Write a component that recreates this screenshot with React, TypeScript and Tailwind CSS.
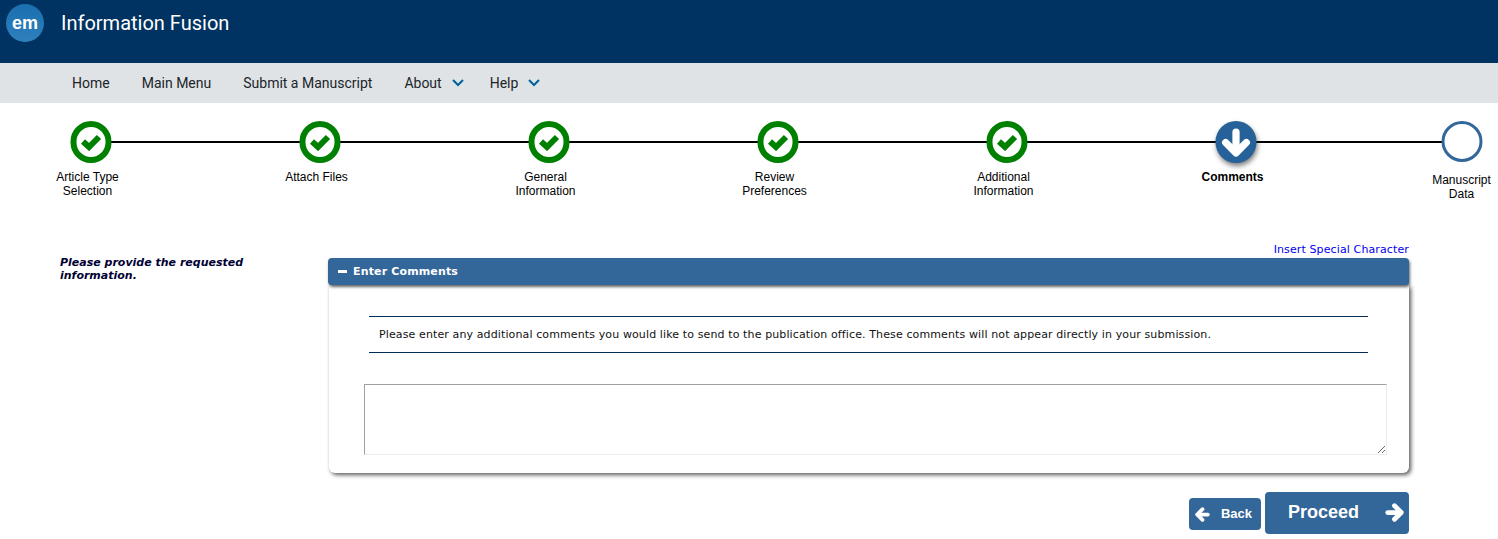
const steps = [
  { label: "Article Type Selection", state: "done" },
  { label: "Attach Files", state: "done" },
  { label: "General Information", state: "done" },
  { label: "Review Preferences", state: "done" },
  { label: "Additional Information", state: "done" },
  { label: "Comments", state: "current" },
  { label: "Manuscript Data", state: "todo" },
];

function IconCheck() {
  return (
    <svg width="21" height="17" viewBox="0 0 21 17" fill="none" stroke="currentColor" strokeWidth="6">
      <path d="M2.5 7.5 8.5 13 18.5 3" />
    </svg>
  );
}

// chunky arrow, points down by default
function IconArrow({ size, className = "" }: { size: number; className?: string }) {
  return (
    <svg width={size} height={size} viewBox="0 0 28 28" fill="none" stroke="currentColor" strokeWidth="7" strokeLinecap="round" strokeLinejoin="round" className={className}>
      <path d="M14 4V23" />
      <path d="M4 14 14 24 24 14" />
    </svg>
  );
}

function IconChevron() {
  return (
    <svg width="12" height="8" viewBox="0 0 12 8" fill="none" stroke="#00629b" strokeWidth="2">
      <path d="M1 1 6 6 11 1" />
    </svg>
  );
}

function StepIcon({ state }: { state: string }) {
  if (state === "done") {
    return (
      <div className="flex h-[42px] w-[41px] items-center justify-center rounded-full border-[6px] border-[#008000] bg-white text-[#008000]">
        <IconCheck />
      </div>
    );
  }
  if (state === "current") {
    return (
      <div className="flex h-[42px] w-[41px] items-center justify-center rounded-full bg-[#266299] text-white shadow-[1px_3px_5px_rgba(0,0,0,0.5)]">
        <IconArrow size={29} />
      </div>
    );
  }
  return <div className="h-[41px] w-[41px] rounded-full border-[3px] border-[#336699] bg-white" />;
}

function Stepper() {
  return (
    <div className="relative h-[125px] pl-[50px]">
      <div className="absolute left-[100px] top-[38px] h-[2px] w-[1345px] bg-black" />
      <div className="relative flex justify-between pt-[18px]">
        {steps.map((s) => (
          <div key={s.label} className="flex w-[74px] translate-x-[0.5px] flex-col items-center">
            <div className={s.state === "todo" ? "" : "translate-x-[3px]"}>
              <StepIcon state={s.state} />
            </div>
            <div
              className={`${s.state === "todo" ? "mt-[11px]" : "mt-[7px]"} ${s.state === "current" ? "font-bold" : ""} text-center font-['Liberation_Sans',sans-serif] text-[12px] leading-[14px] text-black`}
            >
              {s.label}
            </div>
          </div>
        ))}
      </div>
    </div>
  );
}

export default function App() {
  return (
    <div className="h-[539px] overflow-hidden bg-white font-['DejaVu_Sans',sans-serif]">
      <header className="flex h-[63px] items-start gap-[17px] bg-[#003361] pl-[6px] pt-[4px]">
        <div className="flex h-[38px] w-[38px] items-center justify-center rounded-full bg-gradient-to-b from-[#1a6fae] to-[#2f80bd] font-['Liberation_Sans',sans-serif] text-[18px] font-bold text-white">
          em
        </div>
        <div className="pt-[6px] font-['Roboto',sans-serif] text-[20px] leading-[27px] text-white">Information Fusion</div>
      </header>

      <nav className="flex h-[40px] items-center bg-[#dfe3e6] pl-[72px] font-['Roboto',sans-serif] text-[14px] text-[#212529]">
        <a className="mr-[32px]">Home</a>
        <a className="mr-[32px]">Main Menu</a>
        <a className="mr-[32px]">Submit a Manuscript</a>
        <a className="mr-[10px]">About</a>
        <IconChevron />
        <a className="ml-[26px] mr-[10px]">Help</a>
        <IconChevron />
      </nav>

      <Stepper />

      <main className="flex pr-[89px]">
        <div className="w-[328px] shrink-0 pl-[60px] pr-[70px] pt-[28px] text-[11px] font-bold italic leading-[13px] text-[#000033]">
          Please provide the requested information.
        </div>
        <div className="min-w-0 flex-1">
          <div className="h-[30px] pt-[14px] text-right text-[11px] leading-[16px] tracking-[0.12px] text-[#0000ee]">Insert Special Character</div>
          <div className="relative z-10 flex h-[27px] items-center rounded-[4px] bg-[#336699] pl-[10px] text-[11px] font-bold tracking-[0.15px] text-white shadow-[1px_2px_3px_rgba(0,0,0,0.6)]">
            <span className="mr-[6px] h-[2.5px] w-[9px] bg-white" />
            <span className="pt-[1px]">Enter Comments</span>
          </div>
          <section className="ml-[1px] h-[188px] rounded-b-[6px] bg-white pl-[35px] pr-[36px] pt-[31px] shadow-[2px_2px_4px_rgba(0,0,0,0.65)]">
            <div className="mx-[5px] border-y border-[#002b54] py-[10px] pl-[10px] text-[11px] leading-[15px] tracking-[0.118px] text-[#111]">
              Please enter any additional comments you would like to send to the publication office. These comments will not appear directly in your submission.
            </div>
            <textarea className="mt-[31px] block h-[71px] w-[1023px] border border-[#ececec] border-l-[#a0a0a0] border-t-[#a0a0a0] outline-none" />
          </section>
          <div className="mt-[19px] flex items-end justify-end gap-[4px] font-['Liberation_Sans',sans-serif] font-bold text-white">
            <button className="mb-[4px] flex h-[32px] w-[72px] items-center justify-between rounded-[4px] bg-[#336699] pl-[6px] pr-[9px] text-[13px]">
              <IconArrow size={15} className="rotate-90" />
              Back
            </button>
            <button className="flex h-[42px] w-[144px] items-center justify-between rounded-[4px] bg-[#336699] pb-[1px] pl-[23px] pr-[5px] text-[18px]">
              Proceed
              <IconArrow size={19} className="-rotate-90" />
            </button>
          </div>
        </div>
      </main>
    </div>
  );
}
